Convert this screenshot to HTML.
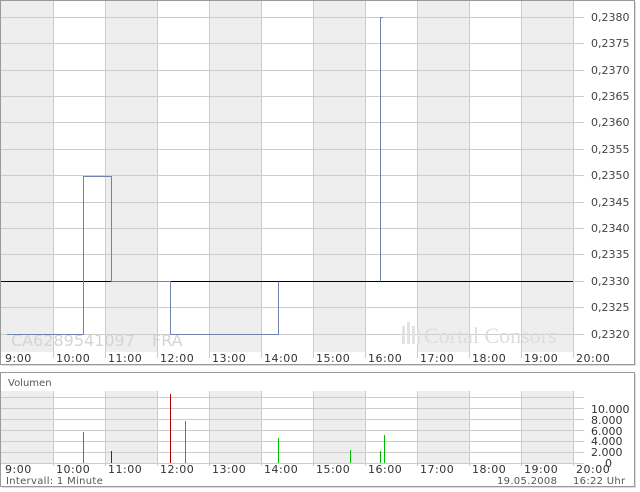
<!DOCTYPE html>
<html><head><style>
body{margin:0;background:#fff;width:640px;height:492px;overflow:hidden}
svg{display:block;font-family:"DejaVu Sans","Liberation Sans",sans-serif}
</style></head><body>
<svg width="640" height="492" xmlns="http://www.w3.org/2000/svg">
<rect x="0.5" y="0.5" width="634" height="364" fill="#fff" stroke="#999"/>
<line x1="635.5" y1="2" x2="635.5" y2="366" stroke="#ddd"/>
<line x1="2" y1="365.5" x2="636" y2="365.5" stroke="#ddd"/>
<g fill="#eee">
<rect x="1" y="1" width="52" height="351"/><rect x="105" y="1" width="52" height="351"/>
<rect x="209" y="1" width="52" height="351"/><rect x="313" y="1" width="52" height="351"/>
<rect x="417" y="1" width="52" height="351"/><rect x="521" y="1" width="52" height="351"/>
</g>
<g stroke="#ccc" stroke-width="1">
<path d="M1 17.5H584M1 43.5H584M1 70.5H584M1 96.5H584M1 122.5H584M1 149.5H584M1 175.5H584M1 202.5H584M1 228.5H584M1 254.5H584M1 281.5H584M1 307.5H584M1 334.5H584"/>
<path d="M53.5 1V358M105.5 1V358M157.5 1V358M209.5 1V358M261.5 1V358M313.5 1V358M365.5 1V358M417.5 1V358M469.5 1V358M521.5 1V358M573.5 1V358"/>
</g>
<text x="11" y="346" font-size="16" fill="#d4d4d4">CA6289541097</text>
<text x="152" y="346" font-size="16" fill="#d4d4d4">FRA</text>
<g fill="#e2e2e2">
<rect x="402" y="326" width="3" height="18"/><rect x="407" y="322" width="3" height="22"/><rect x="412" y="326" width="3" height="18"/><rect x="417" y="330" width="3" height="14"/>
</g>
<text x="424" y="343" font-size="22" fill="#ddd" font-family="Liberation Serif,serif">Cortal Consors</text>
<line x1="1" y1="281.5" x2="573" y2="281.5" stroke="#000"/>
<path d="M7 334.5H83.5V176.5H111.5V281.5H170.5V334.5H278.5V281.5M380.5 281.5V17.5H383" fill="none" stroke="#6f84ac"/>
<g font-size="11" fill="#444">
<text x="591" y="21">0,2380</text><text x="591" y="47">0,2375</text><text x="591" y="74">0,2370</text>
<text x="591" y="100">0,2365</text><text x="591" y="126">0,2360</text><text x="591" y="153">0,2355</text>
<text x="591" y="179">0,2350</text><text x="591" y="206">0,2345</text><text x="591" y="232">0,2340</text>
<text x="591" y="258">0,2335</text><text x="591" y="285">0,2330</text><text x="591" y="311">0,2325</text>
<text x="591" y="338">0,2320</text>
</g>
<g font-size="11" fill="#333" letter-spacing="0.5">
<text x="5" y="362">9:00</text><text x="56" y="362">10:00</text><text x="108" y="362">11:00</text>
<text x="160" y="362">12:00</text><text x="212" y="362">13:00</text><text x="264" y="362">14:00</text>
<text x="316" y="362">15:00</text><text x="368" y="362">16:00</text><text x="420" y="362">17:00</text>
<text x="472" y="362">18:00</text><text x="524" y="362">19:00</text><text x="576" y="362">20:00</text>
</g>
<rect x="0.5" y="372.5" width="634" height="114" fill="#fff" stroke="#999"/>
<line x1="635.5" y1="374" x2="635.5" y2="488" stroke="#ddd"/>
<line x1="2" y1="487.5" x2="636" y2="487.5" stroke="#ddd"/>
<text x="8" y="386" font-size="10" fill="#555">Volumen</text>
<g fill="#eee">
<rect x="1" y="391" width="52" height="72"/><rect x="105" y="391" width="52" height="72"/>
<rect x="209" y="391" width="52" height="72"/><rect x="313" y="391" width="52" height="72"/>
<rect x="417" y="391" width="52" height="72"/><rect x="521" y="391" width="52" height="72"/>
</g>
<g stroke="#ccc">
<path d="M1 397.5H584M1 408.5H584M1 419.5H584M1 430.5H584M1 441.5H584M1 452.5H584M1 463.5H584"/>
<path d="M53.5 391V466M105.5 391V466M157.5 391V466M209.5 391V466M261.5 391V466M313.5 391V466M365.5 391V466M417.5 391V466M469.5 391V466M521.5 391V466M573.5 391V466"/>
</g>
<g stroke-width="1">
<path d="M83.5 432V463M185.5 421V463M278.5 438V463M350.5 450V463M380.5 451V463M384.5 435V463" stroke="#0b0"/>
<path d="M111.5 451V463M170.5 394V463" stroke="#a00"/>
</g>
<g font-size="11" fill="#333">
<text x="591" y="413">10.000</text><text x="591" y="424">8.000</text><text x="591" y="435">6.000</text>
<text x="591" y="445">4.000</text><text x="591" y="456">2.000</text><text x="605" y="467">0</text>
</g>
<g font-size="11" fill="#333" letter-spacing="0.5">
<text x="5" y="473">9:00</text><text x="56" y="473">10:00</text><text x="108" y="473">11:00</text>
<text x="160" y="473">12:00</text><text x="212" y="473">13:00</text><text x="264" y="473">14:00</text>
<text x="316" y="473">15:00</text><text x="368" y="473">16:00</text><text x="420" y="473">17:00</text>
<text x="472" y="473">18:00</text><text x="524" y="473">19:00</text><text x="576" y="473">20:00</text>
</g>
<g font-size="10" fill="#555" letter-spacing="0.3">
<text x="6" y="484">Intervall: 1 Minute</text>
<text x="497" y="484">19.05.2008</text>
<text x="573" y="484">16:22 Uhr</text>
</g>
</svg>
</body></html>
